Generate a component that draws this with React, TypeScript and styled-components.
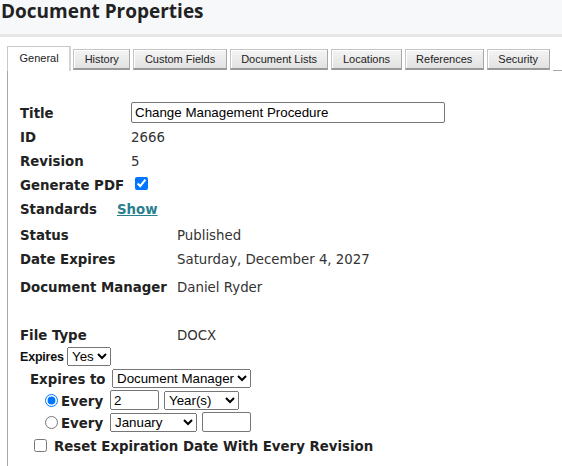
import React from 'react';
import styled, { createGlobalStyle } from 'styled-components';

const Global = createGlobalStyle`
  html, body { margin: 0; padding: 0; background: #fff; }
  body { font-family: "DejaVu Sans", Verdana, sans-serif; color: #222; }
  * { box-sizing: border-box; }
`;

const Page = styled.div`
  width: 562px;
  height: 466px;
  overflow: hidden;
  background: #fff;
`;

const Header = styled.header`
  height: 37px;
  padding-top: 1px;
  background: #f7f8fa;
  border-bottom: 3px solid #e6e6e6;
`;

const PageTitle = styled.h1`
  margin: 0;
  padding-left: 1px;
  font-family: "Open Sans", "DejaVu Sans", sans-serif;
  font-weight: 700;
  font-size: 19px;
  line-height: 20px;
  color: #222;
`;

const TabBar = styled.nav`
  display: flex;
  align-items: flex-end;
  gap: 3px;
  margin-top: 9px;
  padding-left: 7px;
  &::after {
    content: '';
    flex: 1;
    border-bottom: 1px solid #a8a8a8;
  }
`;

const Tab = styled.div<{ $active?: boolean }>`
  display: flex;
  align-items: center;
  justify-content: center;
  white-space: nowrap;
  font-family: "Liberation Sans", Arial, sans-serif;
  font-size: 11px;
  color: #222;
  ${(p) =>
    p.$active
      ? `
    height: 25px;
    margin-right: -1px;
    padding: 0 10.5px 3px 11.5px;
    background: #fff;
    border: 1px solid #c8c8c8;
    border-right: 2px solid #d4d4d4;
    border-bottom: none;
  `
      : `
    height: 21px;
    margin-bottom: 1px;
    padding: 0 10.5px;
    background: linear-gradient(#f4f4f4, #e2e2e2);
    border: 1px solid #c4c4c4;
    border-right-color: #a8a8a8;
    border-bottom: 2px solid #999;
    box-shadow: inset 1px 1px 0 #fff;
  `}
`;

const Content = styled.section`
  margin-left: 7px;
  border-left: 1px solid #a8a8a8;
  padding: 29px 0 0 12px;
  height: 400px;
`;

const FieldRow = styled.div<{ $label: number; $mt?: number }>`
  display: grid;
  grid-template-columns: ${(p) => p.$label}px auto;
  align-items: center;
  height: 24px;
  margin-top: ${(p) => p.$mt ?? 0}px;
`;

const Label = styled.span`
  padding-top: 2px;
  font-weight: 700;
  font-size: 13.33px;
  color: #222;
  white-space: nowrap;
`;

const Value = styled.span`
  padding-top: 2px;
  font-size: 13.33px;
  color: #333;
  white-space: nowrap;
`;

const ShowLink = styled.a`
  padding-top: 2px;
  font-weight: 700;
  font-size: 13.33px;
  color: #2a7f8f;
  text-decoration: underline;
  cursor: pointer;
`;

const TextBox = styled.input<{ $w: number }>`
  width: ${(p) => p.$w}px;
  height: 21px;
  padding: 0 3px;
  border: 1px solid #767676;
  border-radius: 2px;
  font-family: "Liberation Sans", Arial, sans-serif;
  font-size: 13.33px;
  color: #000;
  background: #fff;
  margin: 0;
`;

const SmallBox = styled(TextBox)<{ $ml?: number }>`
  height: 20px;
  margin-left: ${(p) => p.$ml ?? 0}px;
`;

const Select = styled.select<{ $w: number; $ml?: number }>`
  width: ${(p) => p.$w}px;
  height: 19px;
  margin: 0 0 0 ${(p) => p.$ml ?? 0}px;
  font-family: "Liberation Sans", Arial, sans-serif;
  font-size: 13.33px;
  color: #000;
`;

const Check = styled.input`
  width: 13px;
  height: 13px;
  margin: 0 0 0 4px;
`;

const ControlRow = styled.div<{ $indent: number; $h: number; $mt?: number }>`
  display: flex;
  align-items: center;
  height: ${(p) => p.$h}px;
  margin-top: ${(p) => p.$mt ?? 0}px;
  padding-left: ${(p) => p.$indent}px;
`;

const SmallLabel = styled.span`
  width: 47px;
  padding-top: 1px;
  font-family: "Liberation Sans", Arial, sans-serif;
  font-weight: 700;
  font-size: 12.5px;
  letter-spacing: -0.2px;
  color: #111;
`;

const FixedLabel = styled(Label)<{ $w: number }>`
  width: ${(p) => p.$w}px;
`;

const Radio = styled.input`
  width: 13px;
  height: 13px;
  margin: 0 3px 0 0;
`;

const BoxCheck = styled.input`
  width: 13px;
  height: 13px;
  margin: 0 7px 0 0;
`;

const tabs = ['History', 'Custom Fields', 'Document Lists', 'Locations', 'References', 'Security'];

export default function App() {
  return (
    <Page>
      <Global />
      <Header>
        <PageTitle>Document Properties</PageTitle>
      </Header>
      <TabBar>
        <Tab $active>General</Tab>
        {tabs.map((t) => (
          <Tab key={t}>{t}</Tab>
        ))}
      </TabBar>
      <Content>
        <FieldRow $label={111}>
          <Label>Title</Label>
          <TextBox $w={314} defaultValue="Change Management Procedure" />
        </FieldRow>
        <FieldRow $label={111}>
          <Label>ID</Label>
          <Value>2666</Value>
        </FieldRow>
        <FieldRow $label={111}>
          <Label>Revision</Label>
          <Value>5</Value>
        </FieldRow>
        <FieldRow $label={111}>
          <Label>Generate PDF</Label>
          <span>
            <Check type="checkbox" defaultChecked />
          </span>
        </FieldRow>
        <FieldRow $label={97}>
          <Label>Standards</Label>
          <ShowLink>Show</ShowLink>
        </FieldRow>
        <FieldRow $label={157} $mt={2}>
          <Label>Status</Label>
          <Value>Published</Value>
        </FieldRow>
        <FieldRow $label={157}>
          <Label>Date Expires</Label>
          <Value>Saturday, December 4, 2027</Value>
        </FieldRow>
        <FieldRow $label={157} $mt={4}>
          <Label>Document Manager</Label>
          <Value>Daniel Ryder</Value>
        </FieldRow>
        <FieldRow $label={157} $mt={24}>
          <Label>File Type</Label>
          <Value>DOCX</Value>
        </FieldRow>
        <ControlRow $indent={0} $h={21}>
          <SmallLabel>Expires</SmallLabel>
          <Select $w={44} defaultValue="Yes">
            <option>Yes</option>
            <option>No</option>
          </Select>
        </ControlRow>
        <ControlRow $indent={10} $h={22}>
          <FixedLabel $w={82}>Expires to</FixedLabel>
          <Select $w={139} defaultValue="Document Manager">
            <option>Document Manager</option>
            <option>Author</option>
          </Select>
        </ControlRow>
        <ControlRow $indent={25} $h={22}>
          <Radio type="radio" name="every" defaultChecked />
          <FixedLabel $w={49}>Every</FixedLabel>
          <SmallBox $w={49} defaultValue="2" />
          <Select $w={75} $ml={5} defaultValue="Year(s)">
            <option>Year(s)</option>
            <option>Month(s)</option>
          </Select>
        </ControlRow>
        <ControlRow $indent={25} $h={22}>
          <Radio type="radio" name="every" />
          <FixedLabel $w={49}>Every</FixedLabel>
          <Select $w={87} defaultValue="January">
            <option>January</option>
            <option>February</option>
          </Select>
          <SmallBox $w={49} $ml={5} defaultValue="" />
        </ControlRow>
        <ControlRow $indent={14} $h={21} $mt={2}>
          <BoxCheck type="checkbox" />
          <Label>Reset Expiration Date With Every Revision</Label>
        </ControlRow>
      </Content>
    </Page>
  );
}
